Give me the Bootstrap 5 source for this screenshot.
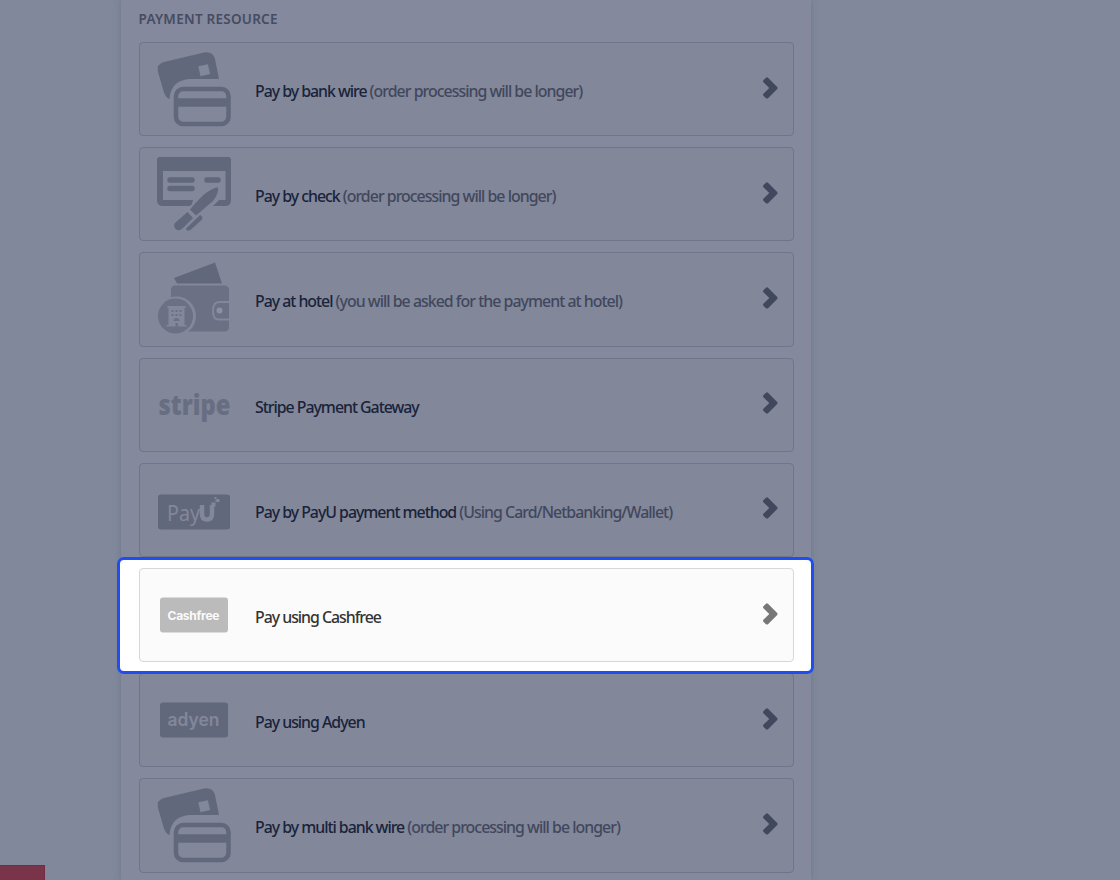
<!DOCTYPE html>
<html lang="en">
<head>
<meta charset="utf-8">
<meta name="viewport" content="width=device-width, initial-scale=1">
<title>Payment resource</title>
<link href="https://cdn.jsdelivr.net/npm/bootstrap@5.3.0/dist/css/bootstrap.min.css" rel="stylesheet">
<style>
body{background:#82889b;font-family:"Noto Sans","Open Sans",sans-serif;height:880px}
.checkout{width:690.400px;height:880px;margin-left:121px;padding:0 17.400px 0 17.600px;background:#84899d;box-shadow:0 0 6px rgba(60,85,110,.36)}
.section-title{font-size:13.500px;line-height:20px;padding-top:9px;height:42px;font-weight:600;color:#464c61;letter-spacing:.25px}
.methods{gap:11px}
.method{position:relative;height:94.2px;width:655.4px;border:1px solid #6f758a;border-radius:4px;background:#82879a;color:#192339;text-decoration:none;font-size:17px;letter-spacing:-1.100px;padding:0 15px 0 16.600px}
.method svg{display:block;flex:none;overflow:visible}
.label-text{margin-left:23px;font-weight:500;padding-top:4px;line-height:26px;white-space:nowrap;transform:scaleX(.935);transform-origin:0 50%}
.label-text span{color:#41475c;font-weight:500;letter-spacing:-1.050px}
.chev{fill:#41475c;margin-left:auto;margin-top:-3px}
.logo{fill:#62687c;color:#82879a}
.logo-box{transform:translateX(.5px)}
.spot{background:#fbfbfb;border-color:#d6d7d7;color:#333;z-index:2}
.spot::before{content:"";position:absolute;inset:-12px -21px -13px -22.600px;background:#fff;border:3px solid #204df0;border-radius:7px;z-index:-2}
.spot::after{content:"";position:absolute;inset:-1px;background:#fbfbfb;border:1px solid #d6d7d7;border-radius:4px;z-index:-1}
.spot .chev{fill:#777}
.spot .logo{fill:#bbb;color:#fbfbfb}
.corner{left:0;top:865px;width:45px;height:15px;background:#79344a;border-top:1px solid #722b43;border-right:1px solid #722b43}
</style>
</head>
<body class="overflow-hidden position-relative">
<svg class="d-none">
<symbol id="cards" viewBox="0 0 76 76"><path d="M8 11 48 1.500Q57 0 59 8L63 28H34Q15 29 13.500 48Q9 46 7.500 40L2 21Q0 13 8 11Z"/><path fill="currentColor" d="m42.300 15.200 9.600-2 2.200 9.800-9.600 2.200z"/><rect x="20" y="38" width="52.500" height="35" rx="7" fill="none" stroke="#62687c" stroke-width="4.500"/><path d="M19 47.300h54v8.500H19z"/></symbol>
<symbol id="check" viewBox="0 0 76 76"><path d="M4 1H72Q75 1 75 4V44Q75 50 69 50H57L63 44H69.500V15H7V44H37L36 48Q35 50 31 50H7Q1 50 1 44V4Q1 1 4 1Z"/><g fill="none" stroke="#62687c" stroke-width="5.500" stroke-linecap="round"><path d="M14 24h22M14 32.500h22M51 24h11"/></g><path d="M62 31.500Q63 37 57 45L40 59.500 34 53.500Q47 38 53 35Q59 31 62 31.500ZM31.500 56 37 62 27 72Q23 76 19.500 73Q16.500 69 20 66ZM42 61l2-2q4 2 1.500 5L34.500 74q-4 2-4.500-1.500z"/></symbol>
<symbol id="wallet" viewBox="0 0 76 76"><path fill="#62687c" d="M18 17 59 1.500 66 22.500H21z"/><path fill="#6b7085" d="M19 24.500H69Q73 25 73 29V66Q73 70.500 68 70.500H18Q15 70.500 15 67V29Q15 24.500 19 24.500Z"/><path fill="none" stroke="#82879a" stroke-width="2" d="M74 41H63Q57 41 57 50T63 58.500H74"/><circle cx="63.500" cy="49.500" r="3" fill="#8b90a3"/><circle cx="20.500" cy="55" r="19.500" fill="#82879a"/><circle cx="19.500" cy="55" r="17.500" fill="#6b7085"/><path fill="#82879a" d="M11.500 45h18v2h-1v17h2v1.500H10.500V64h2V47h-1z"/><path fill="#6b7085" d="M15.500 49h2v2h-2zm4 0h2v2h-2zm4 0h2v2h-2zM15.500 53h2v2h-2zm4 0h2v2h-2zm4 0h2v2h-2zM17.500 60q0-3 3-3t3 3zm2 2h2.500v3.500h-2.500z"/></symbol>
<symbol id="chevron" viewBox="0 0 16 22"><path d="M4 .7Q5 0 6 .8L15.200 10Q16 11 15.200 12L6 21.200Q5 22 4 21.200L1.400 18.700Q.5 17.700 1.400 16.700L7.300 11 1.400 5.200Q.5 4.200 1.400 3.200Z"/></symbol>
</svg>
<main class="checkout">
<h2 class="section-title m-0">PAYMENT RESOURCE</h2>
<div class="methods d-flex flex-column">
<a href="#" class="method d-flex align-items-center"><svg class="logo" width="76" height="76"><use href="#cards"/></svg><div class="label-text">Pay by bank wire <span>(order processing will be longer)</span></div><svg class="chev" width="16" height="22"><use href="#chevron"/></svg></a>
<a href="#" class="method d-flex align-items-center"><svg class="logo" width="76" height="76"><use href="#check"/></svg><div class="label-text">Pay by check <span>(order processing will be longer)</span></div><svg class="chev" width="16" height="22"><use href="#chevron"/></svg></a>
<a href="#" class="method d-flex align-items-center"><svg class="logo" width="76" height="76"><use href="#wallet"/></svg><div class="label-text">Pay at hotel <span>(you will be asked for the payment at hotel)</span></div><svg class="chev" width="16" height="22"><use href="#chevron"/></svg></a>
<a href="#" class="method d-flex align-items-center"><svg class="logo logo-box" width="76" height="76"><text x="2" y="47.500" font-family="Open Sans" font-size="28" font-weight="800" letter-spacing="0" textLength="72" lengthAdjust="spacingAndGlyphs" fill="#686e82">stripe</text></svg><div class="label-text">Stripe Payment Gateway</div><svg class="chev" width="16" height="22"><use href="#chevron"/></svg></a>
<a href="#" class="method d-flex align-items-center"><svg class="logo logo-box" width="76" height="76"><rect x="1.500" y="22.500" width="72" height="35" rx="3"/><text x="10.500" y="49" font-size="22" letter-spacing="0" fill="currentColor" textLength="33" lengthAdjust="spacingAndGlyphs">Pay</text><path d="M45.500 33v9q0 5.500 5 5.500t5-5.500v-9" fill="none" stroke="currentColor" stroke-width="4.500"/><path fill="currentColor" d="M55 30.500h4v4h-4zM59 28h2v2h-2zM58 25h2v2h-2zM60 27h3v3h-3z"/></svg><div class="label-text">Pay by PayU payment method <span>(Using Card/Netbanking/Wallet)</span></div><svg class="chev" width="16" height="22"><use href="#chevron"/></svg></a>
<a href="#" class="method spot d-flex align-items-center"><svg class="logo logo-box" width="76" height="76"><rect x="3.500" y="20.500" width="68" height="35" rx="3"/><text x="11" y="42.500" font-family="Inter" font-size="12" font-weight="700" letter-spacing="0" fill="currentColor" textLength="52">Cashfree</text></svg><div class="label-text">Pay using Cashfree</div><svg class="chev" width="16" height="22"><use href="#chevron"/></svg></a>
<a href="#" class="method d-flex align-items-center"><svg class="logo logo-box" width="76" height="76"><rect x="3.500" y="20.500" width="68" height="35" rx="3"/><text x="11" y="43.500" font-family="Inter" font-size="18" font-weight="600" letter-spacing="0" fill="currentColor" textLength="52" lengthAdjust="spacingAndGlyphs">adyen</text></svg><div class="label-text">Pay using Adyen</div><svg class="chev" width="16" height="22"><use href="#chevron"/></svg></a>
<a href="#" class="method d-flex align-items-center"><svg class="logo" width="76" height="76"><use href="#cards"/></svg><div class="label-text">Pay by multi bank wire <span>(order processing will be longer)</span></div><svg class="chev" width="16" height="22"><use href="#chevron"/></svg></a>
</div>
</main>
<div class="corner position-absolute"></div>
<script src="https://cdn.jsdelivr.net/npm/bootstrap@5.3.0/dist/js/bootstrap.bundle.min.js"></script>
</body>
</html>
